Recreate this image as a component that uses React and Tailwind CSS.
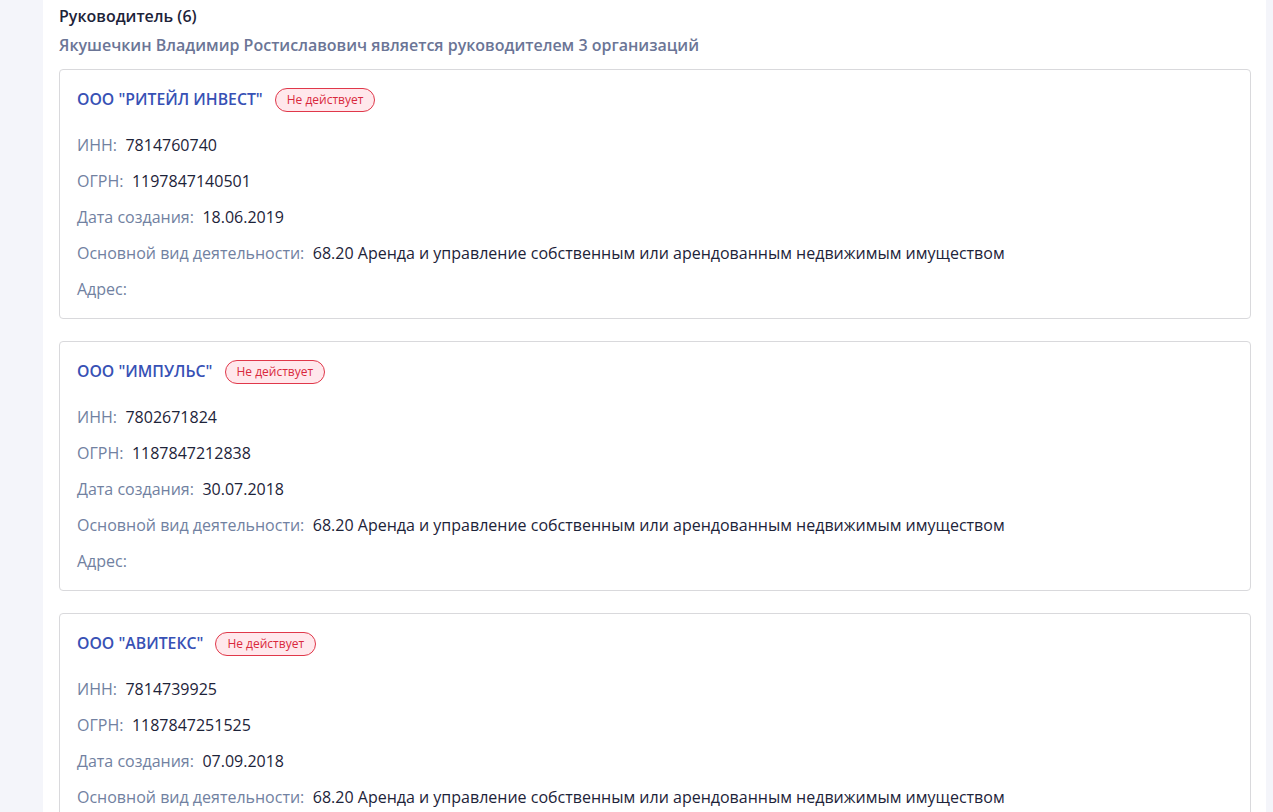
import React from 'react';

const orgs = [
  {
    name: 'ООО "РИТЕЙЛ ИНВЕСТ"',
    inn: '7814760740',
    ogrn: '1197847140501',
    date: '18.06.2019',
    okved: '68.20 Аренда и управление собственным или арендованным недвижимым имуществом',
  },
  {
    name: 'ООО "ИМПУЛЬС"',
    inn: '7802671824',
    ogrn: '1187847212838',
    date: '30.07.2018',
    okved: '68.20 Аренда и управление собственным или арендованным недвижимым имуществом',
  },
  {
    name: 'ООО "АВИТЕКС"',
    inn: '7814739925',
    ogrn: '1187847251525',
    date: '07.09.2018',
    okved: '68.20 Аренда и управление собственным или арендованным недвижимым имуществом',
  },
];

const Row = ({ label, value }) => (
  <div className="flex items-center h-[36px] text-[16px]">
    <span className="text-[#7181a1]">{label}:</span>
    {value && <span className="ml-[8.5px] text-[#1d2339]">{value}</span>}
  </div>
);

const OrgCard = ({ org }) => (
  <div className="border border-[#d9d9dc] rounded-[4px] bg-white px-[17px] pt-[17px] pb-[11px]">
    <div className="flex items-center h-[26px]">
      <span className="text-[15.8px] font-semibold text-[#3751b5]">{org.name}</span>
      <span className="ml-[12px] h-[24px] px-[11px] flex items-center rounded-full border border-[#e0384a] bg-[#ffe8ec] text-[12px] text-[#d9283c]">
        Не действует
      </span>
    </div>
    <div className="mt-[14px]">
      <Row label="ИНН" value={org.inn} />
      <Row label="ОГРН" value={org.ogrn} />
      <Row label="Дата создания" value={org.date} />
      <Row label="Основной вид деятельности" value={org.okved} />
      <Row label="Адрес" />
    </div>
  </div>
);

export default function App() {
  return (
    <div
      className="min-h-screen bg-[#f4f5fa] flex h-[812px] overflow-hidden"
      style={{ fontFamily: '"Open Sans", "Noto Sans", sans-serif' }}
    >
      <div className="ml-[43px] w-[1223px] bg-white px-[16px]">
        <div className="pt-[4px] h-[27px] flex items-center text-[16px] font-semibold text-[#1d2339]">
          Руководитель (6)
        </div>
        <div className="mt-[5px] h-[26px] flex items-center text-[16px] font-semibold text-[#6b7596]">
          Якушечкин Владимир Ростиславович является руководителем 3 организаций
        </div>
        <div className="mt-[11px] flex flex-col gap-[22px] w-[1192px]">
          {orgs.map((o) => (
            <OrgCard key={o.inn} org={o} />
          ))}
        </div>
      </div>
    </div>
  );
}
